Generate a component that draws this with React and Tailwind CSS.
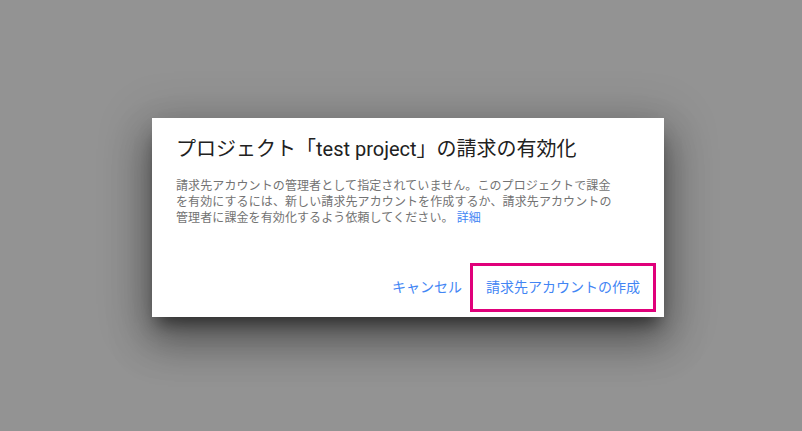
export default function App() {
    return (
        <div
            className="h-[431px] w-[802px] overflow-hidden bg-[#939393] pl-[152px] pt-[118px]"
            style={{ fontFamily: 'Roboto, "Noto Sans CJK JP", sans-serif' }}
        >
            {/* Billing dialog */}
            <div className="flex h-[199px] w-[512px] flex-col bg-white shadow-[0_12px_16px_-6px_rgba(0,0,0,0.5),0_24px_38px_3px_rgba(0,0,0,0.3),0_9px_46px_8px_rgba(0,0,0,0.18)]">
                <div className="px-6 pt-[17px]">
                    <h2 className="text-[20px] leading-[28px] font-normal text-[#212121]">
                        プロジェクト「test project」の請求の有効化
                    </h2>
                    <p className="mt-[15px] w-[440px] text-[12px] leading-[16px] tracking-[0.1px] text-[#737373]">
                        請求先アカウントの管理者として指定されていません。このプロジェクトで課金を有効にするには、新しい請求先アカウントを作成するか、請求先アカウントの管理者に課金を有効化するよう依頼してください。{' '}
                        <a href="#" className="text-[#4285f4]">詳細</a>
                    </p>
                </div>

                <div className="mt-auto flex items-center justify-end gap-2 pr-2 pb-[5px]">
                    <button className="h-[49px] px-0 text-[14px] text-[#4285f4]">
                        キャンセル
                    </button>
                    <button className="h-[49px] border-[3px] border-[#e0007a] px-[13px] text-[14px] text-[#4285f4]">
                        請求先アカウントの作成
                    </button>
                </div>
            </div>
        </div>
    );
}
